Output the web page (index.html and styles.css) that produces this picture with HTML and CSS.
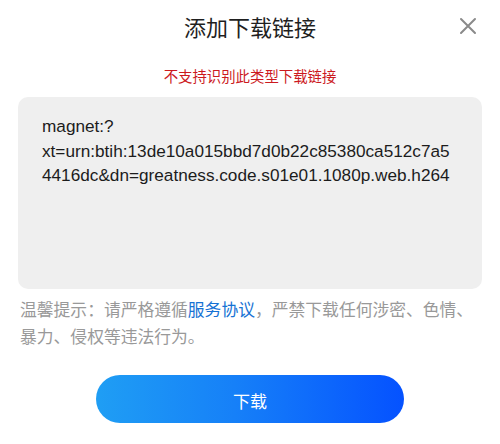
FILE: index.html
```html
<!DOCTYPE html>
<html lang="zh-CN">
<head>
<meta charset="utf-8">
<title>添加下载链接</title>
<link rel="stylesheet" href="styles.css">
</head>
<body>
<div class="dialog">
  <div class="header">
    <span class="spacer"></span>
    <h1 class="title">添加下载链接</h1>
    <button class="close" aria-label="关闭">
      <svg width="18" height="18" viewBox="0 0 18 18"><path d="M2 2 L16 16 M16 2 L2 16" stroke="#8a8a8a" stroke-width="2" stroke-linecap="round" fill="none"/></svg>
    </button>
  </div>
  <p class="error">不支持识别此类型下载链接</p>
  <div class="link-box">magnet:?xt=urn:btih:13de10a015bbd7d0b22c85380ca512c7a54416dc&amp;dn=greatness.code.s01e01.1080p.web.h264</div>
  <p class="notice">温馨提示：请严格遵循<a class="agreement" href="#">服务协议</a>，严禁下载任何涉密、色情、暴力、侵权等违法行为。</p>
  <div class="actions">
    <button class="download">下载</button>
  </div>
</div>
</body>
</html>
```

FILE: styles.css
```css
html, body {
  margin: 0;
  padding: 0;
  background: #ffffff;
}
body {
  width: 500px;
  height: 444px;
  overflow: hidden;
  font-family: "Noto Sans CJK SC", "Liberation Sans", sans-serif;
  text-spacing-trim: space-all;
}
.dialog {
  padding: 0 18px;
}
.header {
  height: 52px;
  display: grid;
  grid-template-columns: 1fr auto 1fr;
  align-items: center;
}
.title {
  margin: 0;
  font-size: 22px;
  font-weight: 400;
  line-height: 30px;
  color: #1f1f1f;
}
.close {
  justify-self: end;
  margin-right: 5px;
  padding: 0;
  border: 0;
  background: none;
  width: 18px;
  height: 18px;
  display: flex;
}
.error {
  margin: 14px 0 0;
  text-align: center;
  font-size: 14.4px;
  line-height: 20px;
  color: #cc1a1e;
}
.link-box {
  margin-top: 11px;
  height: 192px;
  box-sizing: border-box;
  padding: 17px 24px;
  background: #efefef;
  border-radius: 10px;
  font-family: "Liberation Sans", "Noto Sans CJK SC", sans-serif;
  font-size: 17.2px;
  line-height: 24.5px;
  color: #1c1c1c;
  overflow-wrap: anywhere;
}
.notice {
  margin: 7px 0 0;
  padding: 0 2px;
  font-size: 16.8px;
  line-height: 27px;
  color: #999999;
}
.agreement {
  color: #1672d4;
  text-decoration: none;
}
.actions {
  display: flex;
  justify-content: center;
  margin-top: 25px;
}
.download {
  width: 308px;
  height: 48px;
  border: 0;
  border-radius: 24px;
  background: linear-gradient(90deg, #1f9ef4 0%, #1680f8 45%, #0552ff 100%);
  color: #ffffff;
  font-family: "Noto Sans CJK SC", sans-serif;
  font-size: 17px;
  line-height: 48px;
  padding: 2px 0 0;
}
```
